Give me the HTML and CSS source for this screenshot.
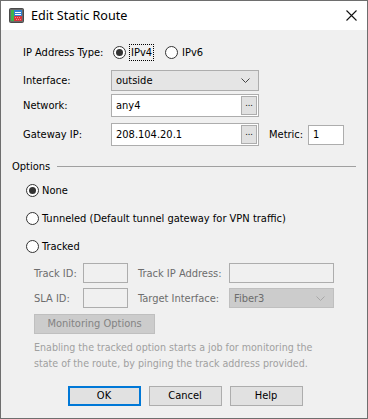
FILE: index.html
```html
<!DOCTYPE html>
<html lang="en">
<head>
    <meta charset="UTF-8">
    <title>Edit Static Route</title>
    <link rel="stylesheet" href="styles.css">
</head>
<body>
    <div class="window">
        <div class="titlebar">
            <svg class="app-icon" width="15" height="15" viewBox="0 0 15 15">
                <rect x="0.5" y="0.5" width="14" height="14" rx="1" fill="#6a6a6a" stroke="#4a4a4a"/>
                <rect x="2" y="2" width="3" height="11" fill="#3cb34a"/>
                <rect x="5" y="2" width="8" height="6" fill="#2f7fd0"/>
                <rect x="6" y="4" width="6" height="1" fill="#ffffff"/>
                <rect x="6" y="6" width="6" height="1" fill="#ffffff"/>
                <rect x="5" y="8" width="8" height="5" fill="#d8343c"/>
                <rect x="6" y="9" width="1" height="1" fill="#f08a8a"/>
                <rect x="8" y="9" width="1" height="1" fill="#f08a8a"/>
                <rect x="10" y="9" width="1" height="1" fill="#f08a8a"/>
                <rect x="7" y="11" width="1" height="1" fill="#f08a8a"/>
                <rect x="9" y="11" width="1" height="1" fill="#f08a8a"/>
                <rect x="11" y="11" width="1" height="1" fill="#f08a8a"/>
            </svg>
            <span class="title">Edit Static Route</span>
            <svg class="close" width="11" height="11" viewBox="0 0 11 11">
                <path d="M0.5 0.5 L10.5 10.5 M10.5 0.5 L0.5 10.5" stroke="#111" stroke-width="1.1" fill="none"/>
            </svg>
        </div>
        <div class="content">
            <div class="row row-type">
                <span class="label-type">IP Address Type:</span>
                <span class="radio checked"></span>
                <span class="focus">IPv4</span>
                <span class="radio"></span>
                <span>IPv6</span>
            </div>
            <div class="row row-iface">
                <span class="label">Interface:</span>
                <div class="combo">
                    <span>outside</span>
                    <svg class="chevron" width="9" height="5" viewBox="0 0 9 5"><path d="M0.5 0.5 L4.5 4.5 L8.5 0.5" stroke="#444" fill="none"/></svg>
                </div>
            </div>
            <div class="row row-net">
                <span class="label">Network:</span>
                <div class="field">
                    <span>any4</span>
                    <span class="browse">...</span>
                </div>
            </div>
            <div class="row row-gw">
                <span class="label">Gateway IP:</span>
                <div class="field">
                    <span>208.104.20.1</span>
                    <span class="browse">...</span>
                </div>
                <span class="metric-label">Metric:</span>
                <div class="metric">1</div>
            </div>

            <div class="options">
                <div class="legend"><span>Options</span><span class="rule"></span></div>
                <div class="opt opt-none"><span class="radio checked"></span><span>None</span></div>
                <div class="opt"><span class="radio"></span><span>Tunneled (Default tunnel gateway for VPN traffic)</span></div>
                <div class="opt"><span class="radio"></span><span>Tracked</span></div>

                <div class="tracked">
                    <div class="trow">
                        <span class="tlabel">Track ID:</span>
                        <div class="dbox small"></div>
                        <span class="tlabel2">Track IP Address:</span>
                        <div class="dbox wide"></div>
                    </div>
                    <div class="trow">
                        <span class="tlabel">SLA ID:</span>
                        <div class="dbox small"></div>
                        <span class="tlabel2">Target Interface:</span>
                        <div class="dcombo">
                            <span>Fiber3</span>
                            <svg class="chevron" width="9" height="5" viewBox="0 0 9 5"><path d="M0.5 0.5 L4.5 4.5 L8.5 0.5" stroke="#a8a8a8" fill="none"/></svg>
                        </div>
                    </div>
                    <div class="mon-btn">Monitoring Options</div>
                    <p class="hint">Enabling the tracked option starts a job for monitoring the state of the route, by pinging the track address provided.</p>
                </div>
            </div>

            <div class="buttons">
                <div class="btn default">OK</div>
                <div class="btn">Cancel</div>
                <div class="btn">Help</div>
            </div>
        </div>
    </div>
</body>
</html>
```

FILE: styles.css
```css
* {
    margin: 0;
    padding: 0;
    box-sizing: border-box;
}
body {
    background: #ffffff;
    font-family: "DejaVu Sans Condensed", "DejaVu Sans", sans-serif;
    font-size: 11px;
    color: #000000;
}
.window {
    width: 368px;
    height: 419px;
    border: 1px solid #6e6e6e;
    background: #f0f0f0;
    display: flex;
    flex-direction: column;
}
.titlebar {
    height: 29px;
    background: #ffffff;
    display: flex;
    align-items: center;
    padding-left: 8px;
    padding-right: 10px;
}
.app-icon {
    margin-right: 7px;
}
.title {
    font-family: "Noto Sans", "Open Sans", sans-serif;
    font-size: 12.6px;
    flex: 1;
}
.content {
    flex: 1;
    display: flex;
    flex-direction: column;
}

/* top part */
.row {
    display: flex;
    align-items: center;
    padding-left: 22px;
}
.row-type {
    height: 20px;
    margin-top: 12px;
}
.label-type {
    width: 90px;
}
.label {
    width: 88px;
}
.radio {
    width: 13px;
    height: 13px;
    border: 1px solid #333333;
    border-radius: 50%;
    background: #ffffff;
    display: inline-flex;
    align-items: center;
    justify-content: center;
    margin-right: 4px;
}
.radio.checked::after {
    content: "";
    width: 7px;
    height: 7px;
    border-radius: 50%;
    background: #333333;
}
.focus {
    outline: 1px dotted #000;
    padding: 1px 1px;
    margin-right: 12px;
}
.row-iface {
    margin-top: 8px;
}
.combo {
    width: 148px;
    height: 21px;
    background: #e5e5e5;
    border: 1px solid #adadad;
    display: flex;
    align-items: center;
    justify-content: space-between;
    padding: 0 8px 0 4px;
}
.row-net {
    margin-top: 3px;
}
.row-gw {
    margin-top: 6px;
}
.field {
    width: 148px;
    height: 23px;
    background: #ffffff;
    border: 1px solid #adadad;
    display: flex;
    align-items: center;
    justify-content: space-between;
    padding: 0 1px 0 4px;
}
.browse {
    width: 16px;
    height: 19px;
    background: #e1e1e1;
    border: 1px solid #adadad;
    font-size: 9px;
    text-align: center;
    line-height: 13px;
}
.metric-label {
    margin-left: 10px;
    width: 39px;
}
.metric {
    width: 36px;
    height: 20px;
    background: #ffffff;
    border: 1px solid #adadad;
    padding-left: 4px;
    line-height: 18px;
}

/* options */
.options {
    padding: 0 11px;
    margin-top: 13px;
}
.legend {
    display: flex;
    align-items: center;
    height: 14px;
}
.rule {
    flex: 1;
    height: 1px;
    background: #a0a0a0;
    margin-left: 7px;
}
.opt {
    display: flex;
    align-items: center;
    height: 14px;
    margin-top: 14px;
    padding-left: 14px;
}
.opt-none {
    margin-top: 10px;
}
.opt .radio {
    margin-right: 3px;
}
.tracked {
    padding-left: 22px;
    color: #6d6d6d;
}
.trow {
    display: flex;
    align-items: center;
    margin-top: 5px;
}
.trow:first-child {
    margin-top: 10px;
}
.tlabel {
    width: 49px;
}
.tlabel2 {
    width: 91px;
    margin-left: 10px;
}
.dbox {
    height: 20px;
    border: 1px solid #adadad;
    background: #f0f0f0;
}
.dbox.small {
    width: 45px;
}
.dbox.wide {
    width: 105px;
}
.dcombo {
    width: 105px;
    height: 20px;
    background: #cccccc;
    border: 1px solid #bfbfbf;
    display: flex;
    align-items: center;
    justify-content: space-between;
    padding: 0 8px 0 4px;
}
.mon-btn {
    width: 121px;
    height: 20px;
    margin-top: 6px;
    background: #cccccc;
    border: 1px solid #bfbfbf;
    color: #838383;
    text-align: center;
    line-height: 18px;
}
.hint {
    margin-top: 5px;
    color: #a0a0a0;
    font-size: 10.6px;
    line-height: 16px;
    width: 300px;
}

/* dialog buttons */
.buttons {
    display: flex;
    justify-content: center;
    gap: 8px;
    margin-top: 15px;
    padding-left: 2px;
}
.btn {
    width: 73px;
    height: 20px;
    background: #e1e1e1;
    border: 1px solid #adadad;
    text-align: center;
    line-height: 18px;
}
.btn.default {
    border: 2px solid #0078d7;
    line-height: 16px;
}
```
